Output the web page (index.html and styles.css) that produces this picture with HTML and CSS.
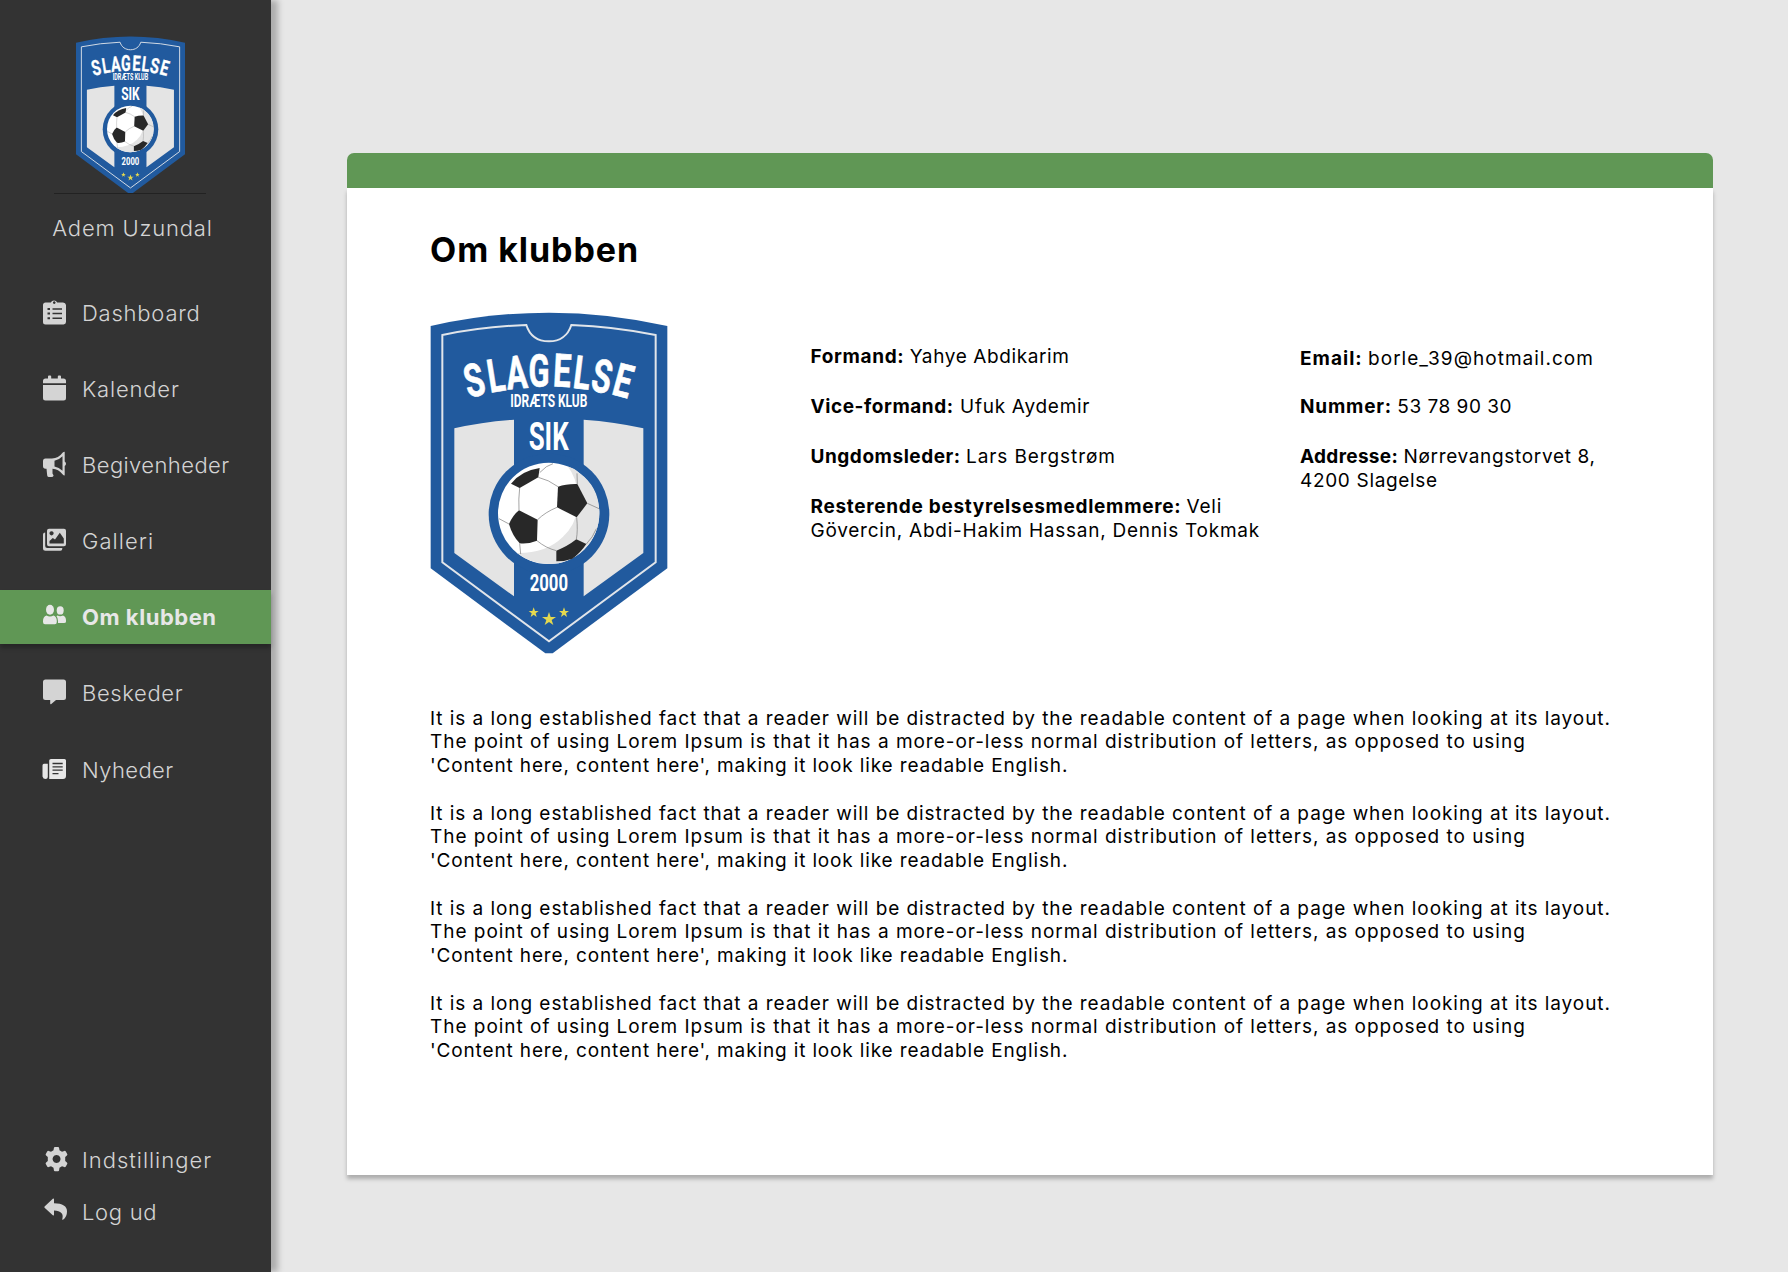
FILE: index.html
```html
<!DOCTYPE html>
<html lang="da">
<head>
<meta charset="utf-8">
<title>Om klubben</title>
<link rel="stylesheet" href="styles.css">
</head>
<body>
<svg class="defs" aria-hidden="true">
  <symbol id="crest" viewBox="33 34 710 1026">
    <path fill="#215a9e" d="M33 76Q210 36 388 36T743 76V803L399 1058H377L33 803Z"/>
    <path fill="none" stroke="#e1e5ea" stroke-width="6" d="M68 103Q190 78 320 73C330 105 355 122 388 122C420 122 445 105 455 73Q585 78 708 103V785L388 1022L68 785Z"/>
    <path fill="#e4e4e4" d="M104 383Q190 363 283 357V887L104 757ZM492 357Q585 363 671 383V757L492 887Z"/>
    <circle fill="#215a9e" cx="388" cy="640" r="181"/>
    <circle fill="#fff" cx="387" cy="638" r="152"/>
    <path fill="#e4e4e4" d="M445 498Q470 530 474 580Q482 660 430 708Q380 758 292 757Q335 790 387 790A152 152 0 0 0 539 638Q539 560 480 518Q465 502 445 498Z"/>
    <g fill="#282828">
      <path d="M274 549Q305 510 360 502L356 530L300 562Z"/>
      <path d="M415 558Q440 549 473 550L503 608L471 650L412 620Z"/>
      <path d="M298 629L354 657L352 720Q325 731 300 728Q278 705 268 670Q280 643 298 629Z"/>
      <path d="M410 750Q442 738 470 716L500 730Q482 757 458 774Q437 782 410 782Z"/>
    </g>
    <path fill="none" stroke="#777" stroke-width="2" d="M300 562Q296 595 298 629M356 530Q386 537 415 558M412 620Q376 635 354 657M503 608L538 624M471 650Q475 690 470 716M352 720Q378 742 410 750M268 670L238 654M300 728L303 760M360 516Q380 494 400 489M473 550L472 518M500 730Q520 710 530 684"/>
    <g fill="#fff" stroke="#fff" stroke-width="2" font-family="Roboto, sans-serif" font-weight="700" text-anchor="middle" font-size="138">
      <text transform="translate(175 286) rotate(-14) scale(.69 1)">S</text>
      <text transform="translate(236 272) rotate(-9) scale(.68 1)">L</text>
      <text transform="translate(295 264) rotate(-5) scale(.68 1)">A</text>
      <text transform="translate(358 258) scale(.67 1)">G</text>
      <text transform="translate(425 258) rotate(3) scale(.69 1)">E</text>
      <text transform="translate(482 264) rotate(7) scale(.68 1)">L</text>
      <text transform="translate(538 274) rotate(11) scale(.69 1)">S</text>
      <text transform="translate(598 287) rotate(15) scale(.69 1)">E</text>
    </g>
    <g fill="#fff" font-family="Roboto, sans-serif" font-weight="700">
      <text x="272" y="320" font-size="53" textLength="231" lengthAdjust="spacingAndGlyphs">IDRÆTS KLUB</text>
      <text x="327" y="448" font-size="114" textLength="120" lengthAdjust="spacingAndGlyphs">SIK</text>
      <text x="330" y="871" font-size="69" textLength="115" lengthAdjust="spacingAndGlyphs">2000</text>
    </g>
    <g fill="#e4d84f">
      <path d="M388 934L393 949H409L396 958L401 973L388 964L375 973L380 958L367 949H383Z"/>
      <path d="M342 920L346 931H357L348 938L351 949L342 942L333 949L336 938L327 931H338Z"/>
      <path d="M433 920L437 931H448L439 938L442 949L433 942L424 949L427 938L418 931H429Z"/>
    </g>
  </symbol>
</svg>
<div class="app">
  <aside class="sidebar">
    <div class="user">
      <svg class="user-crest"><use href="#crest"/></svg>
      <hr class="rule">
      <span class="user-name">Adem Uzundal</span>
    </div>
    <nav class="menu">
      <a class="item dashboard"><svg class="icon" viewBox="0 0 26 27"><path fill-rule="evenodd" d="M4 3.500H8.800A3.500 3.500 0 0 1 15.200 3.500H21A3 3 0 0 1 24 6V23A2.600 2.600 0 0 1 21.500 25.500H3.500A2.500 2.500 0 0 1 1 23V6A2.500 2.500 0 0 1 4 3.500ZM12.200 2.300A1.300 1.300 0 1 0 12.300 2.300ZM5.500 9V11H8V9ZM10.500 9.300V10.700H20V9.300ZM5.500 13.500V15.500H8V13.500ZM10.500 13.800V15.200H20V13.800ZM5.500 18.300V20.300H8V18.300ZM10.500 18.600V20H20V18.600Z"/></svg><span>Dashboard</span></a>
      <a class="item calendar"><svg class="icon" viewBox="0 0 26 27"><path d="M1 8.300V6A2.500 2.500 0 0 1 3.500 3.500H6V1.500Q6 .500 7 .500H8.200Q9.200 .500 9.200 1.500V3.500H15.800V1.500Q15.800 .500 16.800 .500H18Q19 .500 19 1.500V3.500H21.500A2.500 2.500 0 0 1 24 6V8.300ZM1 9.900H24V23A2.500 2.500 0 0 1 21.500 25.500H3.500A2.500 2.500 0 0 1 1 23Z"/></svg><span>Kalender</span></a>
      <a class="item events"><svg class="icon" viewBox="0 0 26 27"><path fill-rule="evenodd" d="M3.500 7.500H10Q16.500 7.500 20.500 1.800Q21.500 .700 22.700 .700V10.500Q24 11.300 24 12.700T22.700 15V24.500Q21.500 24.500 20.500 23.300Q16.500 18 10.500 17.700V22.500L11.600 24.500Q11.200 26 9.500 26H7Q5.500 26 5.200 24.500L4.500 17.700H3.500Q1 17.700 1 15V10.200Q1 7.500 3.500 7.500ZM12.500 9.700V15.500Q17 16.300 20.500 19.800V5.300Q17 9 12.500 9.700Z"/></svg><span>Begivenheder</span></a>
      <a class="item gallery"><svg class="icon" viewBox="0 0 26 27"><path fill-rule="evenodd" d="M7 1.800H22Q24 1.800 24 3.800V17.200Q24 19.200 22 19.200H7Q5 19.200 5 17.200V3.800Q5 1.800 7 1.800ZM9.500 4.200A2.100 2.100 0 1 0 9.600 4.200ZM7.500 16.500H21.800V11.500L17.800 5.800L13 12.500L10.800 10.900L7.500 14ZM3.200 5.500V19Q3.200 21 5.200 21H20.300V21.700Q20.300 23.700 18.300 23.700H3.500Q1 23.700 1 21.200V7.500Q1 5.500 3.200 5.500Z"/></svg><span>Galleri</span></a>
      <a class="item active"><svg class="icon" viewBox="0 0 26 27"><ellipse cx="8" cy="6.700" rx="4" ry="5"/><ellipse cx="18.200" cy="7.400" rx="3.500" ry="4.200"/><path d="M4.500 12.500Q8 14.500 11.500 12.500Q14.800 13.500 14.800 18V19Q14.800 21.200 12.800 21.200H3Q1 21.200 1 19V18Q1 13.500 4.500 12.500ZM14.500 13.200Q15 12.800 15.500 12.600Q18 14 21 12.600Q24 13.800 24 17.500V18.500Q24 20 22 20H16V18Q16 15 14.500 13.200Z"/></svg><span>Om klubben</span></a>
      <a class="item messages"><svg class="icon" viewBox="0 0 26 27"><path d="M3.500 .500H21.500A2.500 2.500 0 0 1 24 3V18.500A2.500 2.500 0 0 1 21.500 21H14L9 25.200Q8.200 25.500 8.200 24.500V21H3.500A2.500 2.500 0 0 1 1 18.500V3A2.500 2.500 0 0 1 3.500 .500Z"/></svg><span>Beskeder</span></a>
      <a class="item news"><svg class="icon" viewBox="0 0 26 27"><path fill-rule="evenodd" d="M9 3H22.500Q24 3 24 4.500V20Q24 23 21 23H7.200V4.500Q7.200 3 9 3ZM10.500 6.800V8.200H20.700V6.800ZM10.500 10.300V11.500H20.700V10.300ZM10.500 13.600V14.800H20.700V13.600ZM10.500 17V18.300H16.500V17ZM2 7.800H5.800V21Q5.800 23 3.500 23T.500 20.500V9.500Q.500 7.800 2 7.800Z"/></svg><span>Nyheder</span></a>
    </nav>
    <nav class="menu-bottom">
      <a class="item settings"><svg class="icon" viewBox="0 0 26 27"><path fill-rule="evenodd" d="M11 1H14Q15 1 15.100 2L15.500 4.300L18 5.700L20.300 4.900Q21.300 4.600 21.800 5.500L23.200 8Q23.700 8.900 22.900 9.500L21.200 11V15L22.900 16.500Q23.700 17.100 23.200 18L21.800 20.500Q21.300 21.400 20.300 21.100L18 20.300L15.500 21.700L15.100 24.300Q15 25.300 14 25.300H11Q10 25.300 9.900 24.300L9.500 21.700L7 20.300L4.700 21.100Q3.700 21.400 3.200 20.500L1.800 18Q1.300 17.100 2.100 16.500L3.800 15V11L2.100 9.500Q1.300 8.900 1.800 8L3.200 5.500Q3.700 4.600 4.700 4.900L7 5.700L9.500 4.300L9.900 2Q10 1 11 1ZM12.500 9A4 4 0 1 0 12.600 9Z"/></svg><span>Indstillinger</span></a>
      <a class="item logout"><svg class="icon" viewBox="0 0 26 27"><path d="M.600 8.500L8.800 .800Q10 .200 10 1.500V5.300Q23 5.500 23 13.500Q23 19 19 21.700Q18 22.200 18.300 21Q20.500 13 10 12.500V16.500Q10 18 8.800 17.200L.600 9.700Q0 9.100 .600 8.500Z"/></svg><span>Log ud</span></a>
    </nav>
  </aside>
  <main class="content">
    <article class="card">
      <header class="card-bar"></header>
      <div class="card-body">
        <h1>Om klubben</h1>
        <section class="about">
          <svg class="crest"><use href="#crest"/></svg>
          <div class="facts board">
            <p class="chair"><b>Formand:</b> <span>Yahye Abdikarim</span></p>
            <p class="vice"><b>Vice-formand:</b> <span>Ufuk Aydemir</span></p>
            <p class="youth"><b>Ungdomsleder:</b> <span>Lars Bergstrøm</span></p>
            <p class="members"><b>Resterende bestyrelsesmedlemmere:</b> <span>Veli<br>Gövercin, Abdi-Hakim Hassan, Dennis Tokmak</span></p>
          </div>
          <div class="facts contact">
            <p class="email"><b>Email:</b> <span>borle_39@hotmail.com</span></p>
            <p class="phone"><b>Nummer:</b> <span>53 78 90 30</span></p>
            <p class="address"><b>Addresse:</b> <span>Nørrevangstorvet 8,<br>4200 Slagelse</span></p>
          </div>
        </section>
        <section class="story">
          <p><span class="first">It is a long established fact that a reader will be distracted by the readable content of a page when looking at its layout.</span><br><span class="second">The point of using Lorem Ipsum is that it has a more-or-less normal distribution of letters, as opposed to using</span><br><span class="third">'Content here, content here', making it look like readable English.</span></p>
          <p><span class="first">It is a long established fact that a reader will be distracted by the readable content of a page when looking at its layout.</span><br><span class="second">The point of using Lorem Ipsum is that it has a more-or-less normal distribution of letters, as opposed to using</span><br><span class="third">'Content here, content here', making it look like readable English.</span></p>
          <p><span class="first">It is a long established fact that a reader will be distracted by the readable content of a page when looking at its layout.</span><br><span class="second">The point of using Lorem Ipsum is that it has a more-or-less normal distribution of letters, as opposed to using</span><br><span class="third">'Content here, content here', making it look like readable English.</span></p>
          <p><span class="first">It is a long established fact that a reader will be distracted by the readable content of a page when looking at its layout.</span><br><span class="second">The point of using Lorem Ipsum is that it has a more-or-less normal distribution of letters, as opposed to using</span><br><span class="third">'Content here, content here', making it look like readable English.</span></p>
        </section>
      </div>
    </article>
  </main>
</div>
</body>
</html>
```
FILE: styles.css
```css
* { box-sizing: border-box; }
body { margin: 0; background: #e7e7e7; color: #000; font-family: Inter, "Liberation Sans", sans-serif; }
p, h1 { margin: 0; }
.defs { display: none; }
.app { display: flex; width: 1788px; height: 1272px; }

/* Sidebar */
.sidebar { display: flex; flex-direction: column; width: 271px; padding: 36px 0 35px; background: #333; color: #d4d4d4; font-size: 22px; font-weight: 300; box-shadow: 7px 0 6px rgba(0, 0, 0, .25); }
.user { display: flex; flex-direction: column; align-items: center; width: 260px; height: 249px; }
.user-crest { display: block; width: 109px; height: 158px; }
.rule { width: 152px; height: 1px; margin: -1px 0 0; border: 0; background: #222; }
.user-name { margin: 20px 0 0 5px; line-height: 28px; letter-spacing: .81px; white-space: nowrap; }
.menu { display: flex; flex-direction: column; gap: 22.200px; }
.item { display: flex; align-items: center; height: 54px; padding-left: 42px; white-space: nowrap; }
.item span { padding-top: 1px; }
.icon { flex: none; width: 26px; height: 27px; margin-right: 14px; fill: #d4d4d4; }
.dashboard { letter-spacing: .78px; }
.calendar { letter-spacing: .83px; }
.events { letter-spacing: .42px; }
.gallery { letter-spacing: 1.050px; }
.messages { letter-spacing: .63px; }
.news { letter-spacing: .4px; }
.settings { letter-spacing: .98px; }
.logout { letter-spacing: .7px; }
.active { background: #609755; color: #e7e7e7; font-weight: 700; letter-spacing: .54px; box-shadow: 0 4px 4px rgba(0, 0, 0, .25); }
.active .icon, .news .icon { fill: #e7e7e7; }
.menu-bottom { margin-top: auto; padding-left: 2px; }
.menu-bottom .item { height: 52px; }
.menu-bottom .icon { margin-right: 12px; }

/* Card */
.content { padding: 153px 0 0 76px; }
.card { display: flex; flex-direction: column; width: 1365.500px; height: 1021.500px; }
.card-bar { height: 34.500px; border-radius: 7px 7px 0 0; background: #609755; }
.card-body { flex: 1; padding: 42px 83px 0; background: #fff; box-shadow: 0 4px 4px rgba(0, 0, 0, .25); }
h1 { font-size: 34px; line-height: 40px; font-weight: 700; letter-spacing: .95px; white-space: nowrap; }
.about { display: flex; align-items: flex-start; height: 395px; margin-top: 42px; }
.crest { flex: none; width: 238px; height: 342px; }
.facts { display: flex; flex-direction: column; gap: 26.200px; font-size: 19px; line-height: 23.800px; white-space: nowrap; }
.board { width: 448px; margin: 33.500px 0 0 142.500px; }
.contact { margin: 35.500px 0 0 41.500px; }
.email { margin-bottom: -2px; }
.chair b { letter-spacing: .65px; }
.chair span { letter-spacing: .61px; }
.vice b { letter-spacing: .56px; }
.vice span { margin-left: 1px; letter-spacing: .73px; }
.youth b { letter-spacing: .54px; }
.youth span { letter-spacing: .9px; }
.members b { letter-spacing: .7px; }
.members span { letter-spacing: .76px; }
.email b { letter-spacing: 1.030px; }
.email span { letter-spacing: 1.010px; }
.phone b { letter-spacing: .8px; }
.phone span { letter-spacing: .51px; }
.address b { letter-spacing: .32px; }
.address span { letter-spacing: .67px; }
.story { display: flex; flex-direction: column; gap: 23.750px; font-size: 19px; line-height: 23.750px; white-space: nowrap; }
.first { letter-spacing: .94px; }
.second { letter-spacing: .97px; }
.third { letter-spacing: .857px; }
```
